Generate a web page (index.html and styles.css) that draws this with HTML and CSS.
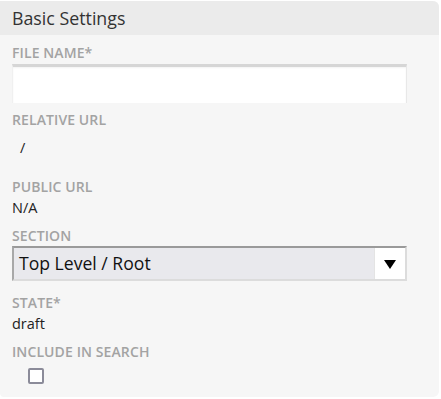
FILE: index.html
```html
<!DOCTYPE html>
<html>
<head>
<meta charset="utf-8">
<link rel="stylesheet" href="styles.css">
</head>
<body>
<div class="panel">
  <div class="panel-head">Basic Settings</div>
  <div class="panel-body">
    <div class="label l-file">FILE NAME*</div>
    <div class="input"></div>
    <div class="label l-rel">RELATIVE URL</div>
    <div class="value v-rel">/</div>
    <div class="label l-pub">PUBLIC URL</div>
    <div class="value v-pub">N/A</div>
    <div class="label l-sec">SECTION</div>
    <div class="select">
      <div class="select-text">Top Level / Root</div>
      <div class="select-arrow">
        <svg width="12" height="10" viewBox="0 0 12 10"><polygon points="0,1 12,1 6,10" fill="#000"/></svg>
      </div>
    </div>
    <div class="label l-state">STATE*</div>
    <div class="value v-state">draft</div>
    <div class="label l-inc">INCLUDE IN SEARCH</div>
    <div class="checkbox"></div>
  </div>
</div>
</body>
</html>
```
FILE: styles.css
```css
html, body {
  margin: 0;
  padding: 0;
  background: #ffffff;
}
body {
  font-family: "Open Sans", "DejaVu Sans", sans-serif;
  color: #222;
}
.panel {
  margin-top: 1px;
  width: 439px;
  height: 396px;
  background: #f6f6f6;
  border-radius: 0 6px 6px 4px;
  overflow: hidden;
  box-sizing: border-box;
}
.panel-head {
  height: 34px;
  background: #ebebeb;
  font-size: 17.8px;
  line-height: 34px;
  color: #333;
  padding-left: 12px;
}
.panel-body {
  padding: 10px 0 0 12px;
  display: flex;
  flex-direction: column;
  align-items: flex-start;
}
.label {
  font-size: 14px;
  font-weight: 600;
  line-height: 16px;
  color: #a3a3a3;
  letter-spacing: 0.1px;
}
.value {
  font-size: 14.5px;
  line-height: 20px;
  color: #222;
}
.input {
  margin-top: 3px;
  width: 395px;
  height: 39px;
  box-sizing: border-box;
  background: #fff;
  border-top: 3px solid #d6d6d6;
  border-right: 1px solid #e8e8e8;
  border-left: 1px solid #f0f0f0;
  box-shadow: inset 0 1px 2px rgba(0,0,0,0.05);
}
.l-rel { margin-top: 9px; }
.v-rel { margin-top: 10px; padding-left: 8px; }
.l-pub { margin-top: 21px; }
.v-pub { margin-top: 3px; }
.l-sec { margin-top: 10px; }
.select {
  margin-top: 2px;
  width: 395px;
  height: 35px;
  box-sizing: border-box;
  display: flex;
  border-top: 2px solid #9a9a9a;
  border-left: 2px solid #a8a8a8;
  border-right: 2px solid #dcdcdc;
  border-bottom: 2px solid #dcdcdc;
  background: #e9e9ed;
}
.select-text {
  flex: 1;
  font-size: 17.6px;
  line-height: 31px;
  padding-left: 5px;
  color: #111;
}
.select-arrow {
  width: 30px;
  background: #fff;
  border-left: 1px solid #e4e4e4;
  display: flex;
  align-items: center;
  justify-content: center;
}
.l-state { margin-top: 14px; }
.v-state { margin-top: 3px; }
.l-inc { margin-top: 10px; }
.checkbox {
  margin-top: 8px;
  margin-left: 16px;
  width: 16px;
  height: 16px;
  box-sizing: border-box;
  border: 2px solid #8b8b99;
  border-radius: 2px;
  background: #fff;
}
```
